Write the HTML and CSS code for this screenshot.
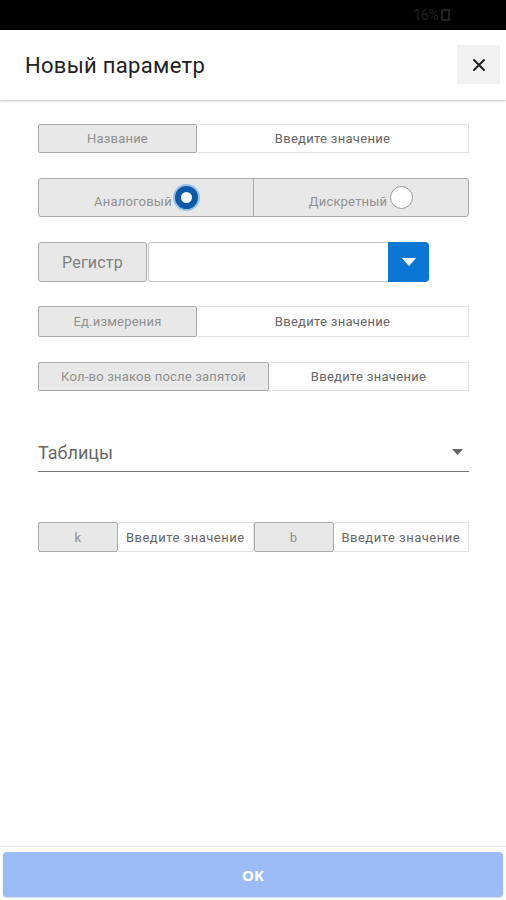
FILE: index.html
```html
<!DOCTYPE html>
<html lang="ru">
<head>
<meta charset="utf-8">
<title>Новый параметр</title>
<link rel="stylesheet" href="styles.css">
</head>
<body>
<div class="status">
  <span class="status-text">16%</span>
  <span class="battery"></span>
</div>
<header class="header">
  <h1 class="title">Новый параметр</h1>
  <button class="close" aria-label="Закрыть">
    <svg width="14" height="14" viewBox="0 0 14 14"><path d="M2 2 L12 12 M12 2 L2 12" stroke="#222" stroke-width="2" stroke-linecap="round"/></svg>
  </button>
</header>
<main class="content">
  <div class="field row-name">
    <div class="label w-160">Название</div>
    <div class="input">Введите значение</div>
  </div>

  <div class="segments">
    <div class="segment">
      <span class="seg-text">Аналоговый</span>
      <span class="radio radio-on"></span>
    </div>
    <div class="segment">
      <span class="seg-text">Дискретный</span>
      <span class="radio"></span>
    </div>
  </div>

  <div class="register">
    <div class="label reg-label">Регистр</div>
    <div class="reg-input"></div>
    <div class="reg-btn">
      <svg width="14" height="8" viewBox="0 0 14 8"><path d="M0 0 H14 L7 8 Z" fill="#fff"/></svg>
    </div>
  </div>

  <div class="field row-unit">
    <div class="label w-160">Ед.измерения</div>
    <div class="input">Введите значение</div>
  </div>

  <div class="field row-digits">
    <div class="label w-231">Кол-во знаков после запятой</div>
    <div class="input">Введите значение</div>
  </div>

  <div class="select">
    <span class="select-text">Таблицы</span>
    <svg class="caret" width="11" height="6" viewBox="0 0 11 6"><path d="M0 0 H11 L5.5 6 Z" fill="#666"/></svg>
  </div>

  <div class="field row-kb">
    <div class="label w-80">k</div>
    <div class="input">Введите значение</div>
    <div class="label w-80 b-label">b</div>
    <div class="input">Введите значение</div>
  </div>
</main>
<footer class="footer">
  <button class="ok">OK</button>
</footer>
</body>
</html>
```
FILE: styles.css
```css
* { box-sizing: border-box; }
html, body { margin: 0; padding: 0; }
body {
  width: 506px;
  height: 900px;
  background: #fff;
  font-family: Roboto, "Noto Sans", sans-serif;
  display: flex;
  flex-direction: column;
  overflow: hidden;
}
.status {
  height: 30px;
  background: #000;
  display: flex;
  align-items: center;
  justify-content: flex-end;
  padding-right: 56px;
  gap: 3px;
}
.status-text {
  color: #222;
  font-size: 14px;
  letter-spacing: -0.5px;
}
.battery {
  width: 9px;
  height: 12px;
  border: 2px solid #222;
  border-radius: 1px;
}
.header {
  height: 70px;
  display: flex;
  align-items: center;
  justify-content: space-between;
  padding: 0 6px 0 25px;
  box-shadow: 0 1px 2px rgba(0,0,0,0.25);
  position: relative;
  z-index: 1;
}
.title {
  margin: 0;
  font-size: 22px;
  font-weight: 400;
  color: #222;
  letter-spacing: 0.3px;
}
.close {
  width: 43px;
  height: 39px;
  border: none;
  background: #f1f1f1;
  display: flex;
  align-items: center;
  justify-content: center;
  padding: 0;
  margin-top: -1px;
}
.content {
  flex: 1;
  padding: 24px 37px 0 38px;
  display: flex;
  flex-direction: column;
}
.field {
  display: flex;
  height: 30px;
  font-size: 13px;
}
.label {
  background: #e8e8e8;
  border: 1px solid #a9a9a9;
  border-radius: 2px;
  color: #909090;
  display: flex;
  align-items: center;
  justify-content: center;
  flex-shrink: 0;
  letter-spacing: 0.2px;
}
.input {
  flex: 1;
  border: 1px solid #e2e2e2;
  border-left: none;
  color: #666;
  display: flex;
  align-items: center;
  justify-content: center;
  background: #fff;
  white-space: nowrap;
  letter-spacing: 0.3px;
}
.w-160 { width: 159px; }
.w-231 { width: 231px; }
.w-80 { width: 80px; }
.row-name { height: 29px; }
.segments {
  margin-top: 25px;
  height: 39px;
  display: flex;
  border: 1px solid #a9a9a9;
  border-radius: 3px;
  background: #e8e8e8;
}
.segment {
  flex: 1;
  display: flex;
  align-items: center;
  justify-content: center;
  gap: 3px;
}
.segment + .segment { border-left: 1px solid #a9a9a9; }
.seg-text {
  font-size: 13px;
  color: #909090;
  margin-top: 7px;
  letter-spacing: 0.2px;
}
.radio {
  width: 23px;
  height: 23px;
  border-radius: 50%;
  border: 1px solid #999;
  background: #fff;
}
.radio-on {
  width: 23px;
  height: 23px;
  border: 6px solid #0d5aa8;
  box-shadow: 0 0 0 2px rgba(80,160,235,0.55);
}
.register {
  margin-top: 25px;
  height: 40px;
  display: flex;
  width: 391px;
}
.reg-label {
  width: 109px;
  font-size: 16px;
  color: #808080;
  border-radius: 3px;
}
.reg-input {
  flex: 1;
  border: 1px solid #c8c8c8;
  border-right: none;
  border-radius: 3px 0 0 3px;
  margin-left: 1px;
  background: #fff;
}
.reg-btn {
  width: 41px;
  background: #0a77d5;
  border-radius: 0 4px 4px 0;
  display: flex;
  align-items: center;
  justify-content: center;
}
.row-unit { margin-top: 24px; height: 31px; }
.row-digits { margin-top: 25px; height: 29px; }
.select {
  margin-top: 40px;
  height: 41px;
  border-bottom: 1px solid #777;
  display: flex;
  align-items: center;
  justify-content: space-between;
  padding: 0 6px 0 0;
}
.select-text {
  font-size: 18px;
  color: #666;
  margin-top: 2px;
}
.caret { margin-top: 1px; }
.row-kb { margin-top: 50px; height: 30px; }
.row-kb .input { border-left: none; letter-spacing: 0.5px; }
.footer {
  height: 54px;
  border-top: 1px solid #e6e6e6;
  padding: 5px 3px 3px 3px;
  display: flex;
}
.ok {
  flex: 1;
  border: none;
  border-radius: 4px;
  background: #9cbcf7;
  color: #fff;
  font-family: "Open Sans", Roboto, sans-serif;
  font-weight: 700;
  font-size: 15px;
  box-shadow: 0 1px 2px rgba(0,0,0,0.15);
}
```
